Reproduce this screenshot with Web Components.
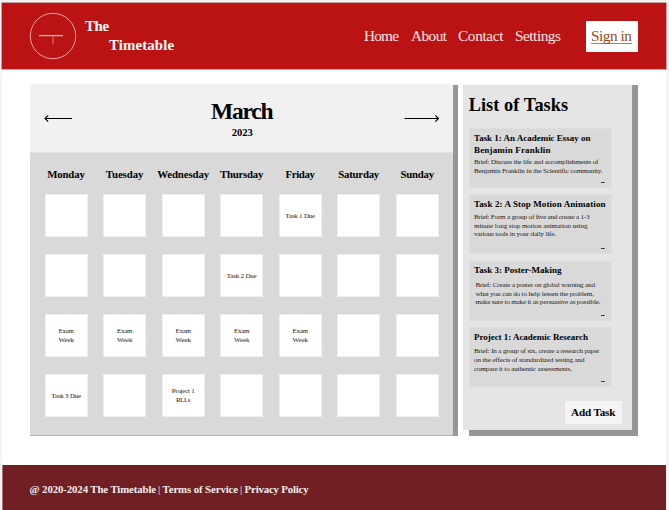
<!DOCTYPE html>
<html lang="en"><head><meta charset="utf-8"><title>The Timetable</title>
<style>
html,body{margin:0;height:510px;overflow:hidden;background:#f5f5f5}
body{font-family:"Liberation Serif",serif;color:#000}
</style></head>
<body>
<timetable-app></timetable-app>
<script>
// A single line of text whose tracking is adjusted to fill a given width.
class FitLine extends HTMLElement{
  connectedCallback(){
    if(this.shadowRoot)return;
    const w=+this.getAttribute('w'),s=this.getAttribute('s'),lh=this.getAttribute('lh');
    const r=this.attachShadow({mode:'open'});
    r.innerHTML=`<style>:host{display:block;flex:none;width:${w}px;height:${lh}px;line-height:${lh}px;font-size:${s}px;white-space:nowrap}span{display:inline-block;line-height:inherit;vertical-align:top}</style><span><slot></slot></span>`;
    const sp=r.querySelector('span'),n=this.textContent.length;
    const nat=sp.getBoundingClientRect().width;
    if(n>1)sp.style.letterSpacing=((w-nat)/(n-1))+'px';
  }
}
const line=(t,w,s,lh,st='')=>`<fit-line w="${w}" s="${s}" lh="${lh}" style="${st}">${t}</fit-line>`;
const define=(name,html)=>customElements.define(name,class extends HTMLElement{
  connectedCallback(){
    if(this.shadowRoot)return;
    this.attachShadow({mode:'open'}).innerHTML=typeof html==='function'?html(this):html;
  }
});
customElements.define('fit-line',FitLine);

define('site-header',`<style>
:host{display:flex;box-sizing:border-box;height:66px;margin-top:3px;background:#bb1313;color:#fff;box-shadow:0 0 0 .7px #b98080;padding-left:26.7px}
svg{display:block;margin-top:9px;flex:none}
.brand{margin:14px 0 0 8px;width:90px;font-weight:bold}
nav{display:flex;margin:24px 0 0 189px;color:#fbeaea}
.sign{box-sizing:border-box;width:52px;height:31px;margin:18px 0 0 25px;padding:6px 0 0 5px;background:#fff;color:#984819}
.sign div{height:16px;width:41px;border-bottom:1px solid #b87b58}
</style>
<svg width="48" height="48" viewBox="0 0 48 48" fill="none" stroke="#eeb7b7"><circle cx="24" cy="24" r="22.7" stroke-width=".9"/><path d="M10 23.6H34" stroke-width="1.3"/><path d="M24 24V32.5" stroke="#db8080" stroke-width="1"/></svg>
<div class="brand">${line('The',24,14.8,19)}${line('Timetable',65,14.8,19,'margin-left:24px')}</div>
<nav>${line('Home',35,15.3,18)}${line('About',36,15.3,18,'margin-left:12px')}${line('Contact',45.5,15.3,18,'margin-left:11px')}${line('Settings',46,15.3,18,'margin-left:11.5px')}</nav>
<div class="sign"><div>${line('Sign in',41,15.3,18)}</div></div>`);

define('month-bar',`<style>
:host{display:flex;justify-content:space-between;box-sizing:border-box;height:68.5px;padding:0 13.5px 0 14px;background:#f1f1f1;border-bottom:1px solid #e4e4e4}
svg{margin-top:28px;flex:none}
.t{display:flex;flex-direction:column;align-items:center;font-weight:bold;padding:13px 0 0 7px}
</style>
<svg width="29" height="12" fill="none" stroke="#000" stroke-width="1.1"><path d="M1 6.5H28M4.2 3.3L1 6.5L4.2 9.7"/></svg>
<div class="t">${line('March',62.5,23.5,28)}${line('2023',21,10.6,16,'margin-top:-.5px')}</div>
<svg width="35" height="12" fill="none" stroke="#000" stroke-width="1.1"><path d="M.5 6.5H34.5M31.3 3.3L34.5 6.5L31.3 9.7"/></svg>`);

define('day-cell',`<style>
:host{display:flex;flex-direction:column;align-items:center;justify-content:center;box-sizing:border-box;width:43px;height:43px;padding-top:1px;background:#fff;border:1px solid #eee;color:#222}
</style><slot></slot>`);

const days=[['Monday',37.5],['Tuesday',37.5],['Wednesday',52],['Thursday',43.5],['Friday',29.5],['Saturday',41],['Sunday',33.5]];
const exam=line('Exam',15.5,7,9)+line('Week',15.5,7,9);
const due=n=>line(`Task ${n} Due`,30,7,9);
const cells={4:due(1),10:due(2),14:exam,15:exam,16:exam,17:exam,18:exam,21:due(3),23:line('Project 1',23,7,9)+line('RLLs',14.5,7,9)};
define('month-calendar',`<style>
:host{display:block;flex:none;box-sizing:border-box;width:423px;height:351px;background:#d9d9d9;box-shadow:0 1px 0 #b2b2b2,5px 1px 0 #969696}
.days{display:grid;grid-template-columns:repeat(7,58.55px);justify-items:center;margin:14.5px 0 0 7.3px;font-weight:bold}
.grid{display:grid;grid-template-columns:repeat(7,43px);column-gap:15.5px;row-gap:17px;margin:12px 0 0 14.7px}
</style><month-bar></month-bar>
<div class="days">${days.map(d=>line(d[0],d[1],10.8,15,'margin-left:-1px')).join('')}</div>
<div class="grid">${Array.from({length:28},(_,i)=>`<day-cell>${cells[i]||''}</day-cell>`).join('')}</div>`);

define('task-card',`<style>
:host{display:flex;flex-direction:column;box-sizing:border-box;width:143px;height:60px;background:#d9d9d9;border:.5px solid #dedede;padding:2.5px 0 0 4px}
.more{margin:auto 6px 4px auto;width:4px;height:1px;background:repeating-linear-gradient(90deg,#222 0 1px,#666 1px 2px)}
</style><slot></slot><div class="more"></div>`);

const h=(t,w)=>line(t,w,9,12,'font-weight:bold');
const b=(t,w,st='')=>line(t,w,7.1,8.8,'color:#222;'+st);
define('task-panel',`<style>
:host{display:block;flex:none;box-sizing:border-box;width:169.5px;height:345px;margin:1px 0 0 10px;background:#e5e5e5;box-shadow:6px 6px 0 #969696,6px 0 0 #969696;padding:9px 0 0 6px}
.list{display:grid;row-gap:6.4px;margin-top:11px}
.add{display:block;box-sizing:border-box;width:57px;height:23px;margin:14px 0 0 96px;padding:4px 0 0 6px;background:#f4f4f4;font-weight:bold}
</style>
${line('List of Tasks',99.5,18.3,23,'font-weight:bold;margin-left:-.3px')}
<div class="list">
<task-card>${h('Task 1: An Academic Essay on',116.5)}${h('Benjamin Franklin',76.5)}${b('Brief: Discuss the life and accomplishments of',124.5,'margin-top:2.5px')}${b('Benjamin Franklin in the Scientific community.',128.5)}</task-card>
<task-card>${h('Task 2: A Stop Motion Animation',131.5)}${b('Brief: Form a group of five and create a 1-3',115.5,'margin-top:3px')}${b('minute long stop motion animation using',113.5)}${b('various tools in your daily life.',82)}</task-card>
<task-card>${h('Task 3: Poster-Making',87.5)}${b('Brief: Create a poster on global warning and',119.5,'margin:4.5px 0 0 1.5px')}${b('what you can do to help lessen the problem,',118.5,'margin-left:1.5px')}${b('make sure to make it as persuasive as possible.',125,'margin-left:1.5px')}</task-card>
<task-card>${h('Project 1: Academic Research',114)}${b('Brief: In a group of six, create a research paper',125.5,'margin-top:4.5px')}${b('on the effects of standardized testing and',110.5)}${b('compare it to authentic assessments.',98)}</task-card>
</div>
<div class="add">${line('Add Task',44.5,11.2,15)}</div>`);

define('site-footer',`<style>
:host{display:flex;box-sizing:border-box;height:45px;margin-top:29px;background:#702022;color:#f5eded;padding:17px 0 0 26.3px;border-left:.7px solid #a77}
</style>${line('@ 2020-2024 The Timetable',126.5,10.8,15,'font-weight:bold')}${line('|',2,11,15,'margin-left:2px')}${line('Terms of Service',75.5,10.8,15,'margin-left:2.5px;font-weight:bold')}${line('|',2,11,15,'margin-left:2px')}${line('Privacy Policy',64,10.8,15,'margin-left:2.5px;font-weight:bold')}`);

define('timetable-app',`<style>
:host{display:flex;flex-direction:column;width:663.5px;height:510px;margin:0 0 0 2.3px;background:linear-gradient(#f0f0f0 2.5px,#fff 3px)}
main{display:flex;height:352px;margin:15px 0 0 27.7px}
</style><site-header></site-header><main><month-calendar></month-calendar><task-panel></task-panel></main><site-footer></site-footer>`);
</script>
</body></html>
